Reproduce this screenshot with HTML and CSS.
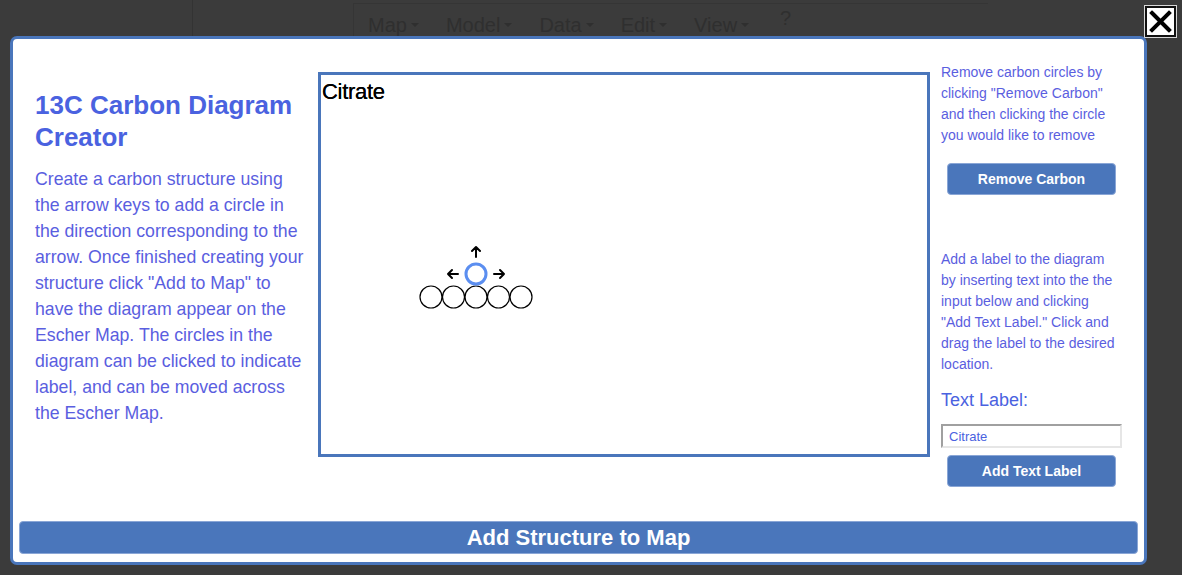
FILE: index.html
```html
<!DOCTYPE html>
<html>
<head>
<meta charset="utf-8">
<link rel="stylesheet" href="styles.css">
</head>
<body>
<div class="page">
  <div class="sidebar"></div>
  <nav class="menubar">
    <span class="menu">Map <i class="caret"></i></span>
    <span class="menu">Model <i class="caret"></i></span>
    <span class="menu">Data <i class="caret"></i></span>
    <span class="menu">Edit <i class="caret"></i></span>
    <span class="menu">View <i class="caret"></i></span>
    <span class="menu help">?</span>
  </nav>
</div>

<button class="close" aria-label="Close">
  <svg width="23" height="23" viewBox="0 0 23 23"><path d="M3 3 L20 20 M20 3 L3 20" stroke="#000" stroke-width="4" stroke-linecap="square"/></svg>
</button>

<div class="modal">
  <div class="main">
    <section class="intro">
      <h1 class="title">13C Carbon Diagram Creator</h1>
      <p class="desc">Create a carbon structure using the arrow keys to add a circle in the direction corresponding to the arrow. Once finished creating your structure click "Add to Map" to have the diagram appear on the Escher Map. The circles in the diagram can be clicked to indicate label, and can be moved across the Escher Map.</p>
    </section>

    <div class="canvas">
      <span class="label">Citrate</span>
      <svg class="diagram" width="606" height="379" viewBox="0 0 606 379">
        <g fill="none" stroke="#000" stroke-width="1.2">
          <circle cx="110" cy="222" r="11"/>
          <circle cx="132.5" cy="222" r="11"/>
          <circle cx="155" cy="222" r="11"/>
          <circle cx="177.5" cy="222" r="11"/>
          <circle cx="200" cy="222" r="11"/>
        </g>
        <circle cx="155" cy="199" r="10" fill="none" stroke="#5b8ef0" stroke-width="3"/>
        <g fill="none" stroke="#000" stroke-width="2" stroke-linecap="round" stroke-linejoin="round">
          <path d="M155 182 V172 M151 176 L155 172 L159 176"/>
          <path d="M137 199 H127 M131 195 L127 199 L131 203"/>
          <path d="M173 199 H183 M179 195 L183 199 L179 203"/>
        </g>
      </svg>
    </div>

    <aside class="side">
      <p class="help-text">Remove carbon circles by clicking "Remove Carbon" and then clicking the circle you would like to remove</p>
      <button class="btn remove">Remove Carbon</button>
      <p class="help-text second">Add a label to the diagram by inserting text into the the input below and clicking "Add Text Label." Click and drag the label to the desired location.</p>
      <label class="field-label" for="lbl">Text Label:</label>
      <input id="lbl" class="field" type="text" value="Citrate">
      <button class="btn add-label">Add Text Label</button>
    </aside>
  </div>
  <button class="add-structure">Add Structure to Map</button>
</div>
</body>
</html>
```

FILE: styles.css
```css
html, body {
  margin: 0;
  padding: 0;
  width: 1182px;
  height: 575px;
  overflow: hidden;
  background: #3b3b3b;
  font-family: "Liberation Sans", Arial, sans-serif;
}

.page {
  display: flex;
  height: 575px;
}

.sidebar {
  width: 192px;
  border-right: 1px solid #333;
  height: 36px;
}

.menubar {
  display: flex;
  align-items: center;
  height: 38px;
  margin-left: 160px;
  padding-left: 14px;
  border-left: 1px solid #353535;
  border-top: 1px solid #353535;
  margin-top: 3px;
  width: 620px;
}

.menu {
  color: #2f2f2f;
  font-size: 20px;
  margin-right: 27px;
  display: flex;
  align-items: center;
  gap: 4px;
  padding-top: 4px;
}

.caret {
  display: inline-block;
  width: 0;
  height: 0;
  border-left: 4px solid transparent;
  border-right: 4px solid transparent;
  border-top: 4px solid #2f2f2f;
}

.help {
  font-size: 20px;
  margin-left: 4px;
  margin-top: -14px;
}

.close {
  position: absolute;
  left: 1145px;
  top: 6px;
  width: 31px;
  height: 31px;
  padding: 0;
  background: #fff;
  border: 2px solid #111;
  outline: 1px solid #d8d8d8;
  display: flex;
  align-items: center;
  justify-content: center;
}

.modal {
  position: absolute;
  left: 10px;
  top: 36px;
  box-sizing: content-box;
  width: 1119px;
  height: 515px;
  background: #fff;
  border: 3px solid #4a76bb;
  border-radius: 7px;
  display: flex;
  flex-direction: column;
  padding: 0 6px 8px 6px;
}

.main {
  flex: 1;
  display: flex;
  align-items: flex-start;
  padding-top: 23px;
  padding-left: 16px;
}

.intro {
  width: 272px;
  flex: none;
  padding-top: 27px;
  margin-right: 11px;
}

.title {
  margin: 0;
  font-size: 26px;
  line-height: 32px;
  font-weight: bold;
  color: #4a62e0;
}

.desc {
  margin: 13px 0 0 0;
  font-size: 17.7px;
  line-height: 26px;
  color: #5a5ee0;
}

.canvas {
  position: relative;
  flex: none;
  margin-top: 10px;
  width: 606px;
  height: 379px;
  border: 3px solid #4a76bb;
  margin-right: 11px;
}

.label {
  position: absolute;
  left: 1px;
  top: 4px;
  font-size: 22px;
  line-height: 26px;
  color: #000;
  letter-spacing: -0.3px;
  text-shadow: 0 0 0.5px #000;
}

.diagram {
  position: absolute;
  left: 0;
  top: 0;
}

.side {
  width: 181px;
  flex: none;
  display: flex;
  flex-direction: column;
  align-items: flex-start;
}

.help-text {
  margin: 0;
  font-size: 14px;
  line-height: 21px;
  color: #5a5ee0;
}

.help-text.second {
  margin-top: 54px;
}

.btn {
  margin-left: 6px;
  width: 169px;
  height: 32px;
  background: #4a76bb;
  color: #fff;
  font-family: "Liberation Sans", Arial, sans-serif;
  font-weight: bold;
  font-size: 14px;
  border: 1px solid #8aa6d6;
  border-radius: 4px;
  padding: 0;
}

.remove {
  margin-top: 17px;
}

.field-label {
  margin-top: 13px;
  font-size: 18px;
  line-height: 24px;
  color: #4a62e0;
}

.field {
  margin-top: 12px;
  width: 181px;
  height: 24px;
  box-sizing: border-box;
  border: 2px solid #e6e6e6;
  border-top-color: #a0a0a0;
  border-left-color: #a0a0a0;
  padding: 0 6px;
  font-family: "Liberation Sans", Arial, sans-serif;
  font-size: 13px;
  color: #4a62e0;
}

.add-label {
  margin-top: 7px;
}

.add-structure {
  height: 33px;
  width: 100%;
  flex: none;
  background: #4a76bb;
  color: #fff;
  border: 1px solid #8aa6d6;
  border-radius: 4px;
  font-family: "Liberation Sans", Arial, sans-serif;
  font-weight: bold;
  font-size: 22px;
  padding: 0;
}
```
